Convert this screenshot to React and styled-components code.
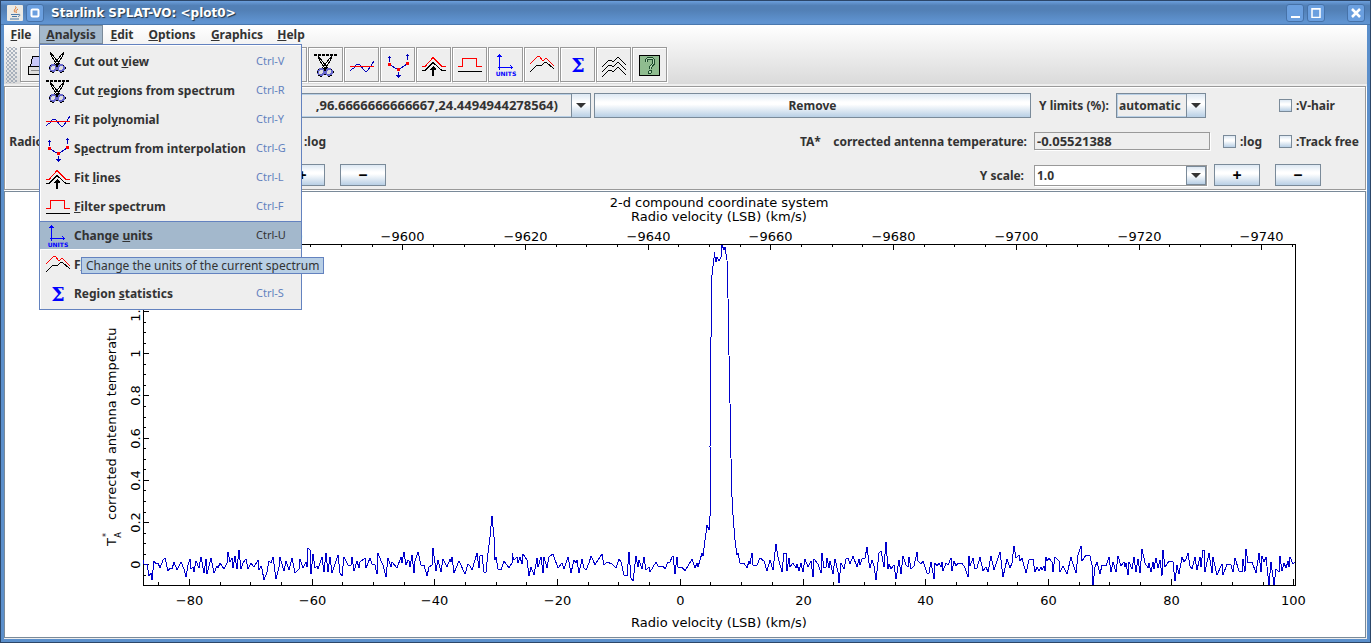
import React, { useState } from "react";
import styled, { createGlobalStyle, css } from "styled-components";

const blue = "#0000ff";

const ScissorsIcon = ({ cut }) => (
  <Icon viewBox="0 0 24 24">
    {cut && (
      <path d="M0 2h24" stroke="#000" strokeWidth="2" strokeDasharray="3 1" />
    )}
    <g transform={cut ? "translate(0 1)" : undefined}>
      <path d="M4 2l2 5 6 9 1.500-2L6 4zM18 2l-2 5-6 9-1.500-2L16 4z" fill="#fff" stroke="#000" />
      <circle cx="7" cy="18" r="3" fill="#ddd" stroke="#6666cc" strokeWidth="2" />
      <circle cx="15" cy="18" r="3" fill="#ddd" stroke="#6666cc" strokeWidth="2" />
      <path d="M3 17v2M4 15h1M4 21h2M8 22h-2M19 17v2M17 15h1M18 21h-2M14 22h2M10 15l1 2 1-2M10 20h2" stroke="#000" fill="none" />
    </g>
  </Icon>
);

const PolynomialIcon = () => (
  <Icon viewBox="0 0 24 24">
    <path d="M0 18l3-3h1l3-4h2l6 7h2l4-5 3-5" stroke="#0000bb" fill="none" />
    <path d="M0 13.500h24" stroke="#ff0000" />
  </Icon>
);

const InterpolationIcon = () => (
  <Icon viewBox="0 0 24 24">
    <g stroke="#0000bb" fill="none">
      <path d="M3.500 11.500L12.500 17l9-6.500" />
      <path d="M3.500 9V3.500M1.500 5.500l2-2 2 2M21.500 7V1.500M19.500 3.500l2-2 2 2M12.500 19v5M10.500 22l2 2 2-2" />
    </g>
    <path d="M2 10h3v3H2zM11 15h3v3h-3zM20 9h3v3h-3z" fill="#ff0000" />
  </Icon>
);

const FitLinesIcon = () => (
  <Icon viewBox="0 0 24 24">
    <path d="M0 13.500h3l8-9 9 9h4" stroke="#ff0000" fill="none" />
    <path d="M0 17.500h3l8-8 9 8h4" stroke="#000" fill="none" />
    <path d="M11 13l3 3v1h-2v6h-2v-6H8v-1z" fill="#000" />
  </Icon>
);

const FilterIcon = () => (
  <Icon viewBox="0 0 24 24">
    <path d="M0 13.500h4.500v-8h14v8H24" stroke="#ff0000" fill="none" />
    <path d="M0 18.500h24" stroke="#000" />
  </Icon>
);

const UnitsIcon = () => (
  <Icon viewBox="0 0 24 24">
    <path d="M5.500 17V2M3.500 4l2-2 2 2M4 14.500h15M16.500 12.500l2 2-2 2" stroke={blue} fill="none" />
    <IconText x="12" y="23" $size={6}>
      UNITS
    </IconText>
  </Icon>
);

const FluxIcon = () => (
  <Icon viewBox="0 0 24 24">
    <path d="M0 11l8-8h1l4 5 3-3 8 8" stroke="#ff0000" fill="none" />
    <path d="M0 19l7-7h2l2 1 4-4h1l8 7" stroke="#000" fill="none" />
  </Icon>
);

const SigmaIcon = () => (
  <Icon viewBox="0 0 24 24">
    <IconText x="12" y="19" $size={19} $serif>
      Σ
    </IconText>
  </Icon>
);

const StackIcon = () => (
  <Icon viewBox="0 0 24 24">
    {[0, 5, 10].map(y => (
      <path
        key={y}
        d={`M0 ${y + 14}l7-7h2l2 2 5-5 8 8`}
        stroke="#000"
        fill="none"
      />
    ))}
  </Icon>
);

const HelpIcon = () => (
  <Icon viewBox="0 0 24 24">
    <rect x="1.500" y="2.500" width="20" height="20" fill="#8fbc8f" stroke="#000" />
    <path d="M8 9c0-5 8-5 8 0 0 3-4 3-4 7" stroke="#1c4a2c" strokeWidth="3" fill="none" />
    <path d="M8 9c0-5 8-5 8 0 0 3-4 3-4 7" stroke="#b4d8b4" strokeWidth="1" fill="none" />
    <circle cx="12" cy="19" r="1.500" fill="#b4d8b4" stroke="#1c4a2c" />
  </Icon>
);

const PrintIcon = () => (
  <Icon viewBox="0 0 24 24">
    <path d="M6.500 3.500h12v10h-14z" fill="#c8c8f8" stroke="#000" />
    <path d="M2.500 13.500h19v8h-19z" fill="#ddd" stroke="#000" />
    <path d="M5 17.500h12" stroke="#888" />
  </Icon>
);

const menus = [
  { name: "File", width: 34 },
  { name: "Analysis", width: 64 },
  { name: "Edit", width: 36 },
  { name: "Options", width: 62 },
  { name: "Graphics", width: 66 },
  { name: "Help", width: 40 }
];

// `at` is the index of the mnemonic letter
const analysisItems = [
  { name: "Cut out view", at: 8, keys: "Ctrl-V", icon: <ScissorsIcon /> },
  { name: "Cut regions from spectrum", at: 4, keys: "Ctrl-R", icon: <ScissorsIcon cut /> },
  { name: "Fit polynomial", at: 7, keys: "Ctrl-Y", icon: <PolynomialIcon /> },
  { name: "Spectrum from interpolation", at: 1, keys: "Ctrl-G", icon: <InterpolationIcon /> },
  { name: "Fit lines", at: 4, keys: "Ctrl-L", icon: <FitLinesIcon /> },
  { name: "Filter spectrum", at: 0, keys: "Ctrl-F", icon: <FilterIcon /> },
  {
    name: "Change units",
    at: 7,
    keys: "Ctrl-U",
    icon: <UnitsIcon />,
    tip: "Change the units of the current spectrum"
  },
  { name: "Flux units", at: 1, keys: "", icon: <FluxIcon /> },
  { name: "Region statistics", at: 7, keys: "Ctrl-S", icon: <SigmaIcon /> }
];

const tools = [
  ["Print", <PrintIcon />],
  ["Save", null],
  ["Close", null],
  ["Configure", null],
  ["Fit width", null],
  ["Fit height", null],
  ["Read line", null],
  ["Cut out view", <ScissorsIcon />],
  ["Cut regions", <ScissorsIcon cut />],
  ["Fit polynomial", <PolynomialIcon />],
  ["Interpolate", <InterpolationIcon />],
  ["Fit lines", <FitLinesIcon />],
  ["Filter", <FilterIcon />],
  ["Change units", <UnitsIcon />],
  ["Flux units", <FluxIcon />],
  ["Statistics", <SigmaIcon />],
  ["Stack", <StackIcon />],
  ["Help", <HelpIcon />]
];

const spectrum = `143,560 144,564 147,564 149,576 151,573 152,580 154,561 156,564 158,563 160,568 163,560 165,558
168,571 170,568 172,569 174,562 177,570 181,562 184,569 186,577 188,565 190,559 191,569 193,567 194,572 196,561
199,568 201,557 204,573 206,559 207,574 211,558 214,573 217,566 218,568 220,563 224,569 227,563 228,552 230,562
232,558 233,568 235,556 237,569 239,550 241,569 243,563 246,559 248,569 251,563 254,567 258,560 259,570 261,566
262,569 264,580 267,572 269,561 271,563 273,557 276,579 279,567 280,557 284,571 286,561 289,570 292,558 295,573
299,569 300,559 303,568 306,562 307,567 308,548 310,550 311,574 313,554 315,568 317,566 318,569 322,557 324,572
326,553 328,572 330,557 332,573 335,564 338,555 340,573 342,576 344,557 348,565 351,565 352,557 354,571 357,561
359,568 360,562 365,558 366,568 370,558 372,564 375,565 377,574 378,553 381,561 383,565 386,577 388,558 391,567
392,562 397,568 401,557 402,563 404,552 406,565 408,560 409,561 410,567 412,555 414,573 415,561 418,552 421,565
424,565 427,576 429,567 432,565 433,548 436,571 438,560 441,572 443,559 447,567 450,559 451,562 452,557 454,573
459,561 465,574 468,564 470,566 472,570 475,560 477,553 479,568 480,556 482,555 484,572 486,572 488,553 490,537
492,516 494,537 495,560 496,557 498,569 501,570 504,561 509,568 512,563 512,553 514,560 517,557 518,563 520,557
522,564 523,554 527,560 529,576 531,567 534,575 537,558 538,567 541,557 543,573 544,557 547,568 549,557 553,554
558,568 562,563 564,569 568,557 571,573 574,560 576,563 577,560 579,573 582,559 584,568 586,570 589,563 591,556
593,560 595,565 598,560 602,554 604,565 607,562 612,564 616,568 619,559 621,562 624,575 627,576 629,552 631,578
633,581 636,556 638,567 639,560 642,569 644,557 646,570 649,567 650,572 656,562 658,566 663,566 665,569 668,562
670,562 672,557 673,556 675,574 677,557 678,567 682,567 685,571 692,559 695,568 697,563 698,567 702,553 703,556
707,525 709,530 710,516 710,447 711,337 712,275 714,258 714,252 716,262 717,257 719,261 721,257 722,245 724,250
725,247 727,260 728,298 729,355 730,403 731,458 732,497 733,515 735,540 737,555 738,553 740,563 744,563 747,568
749,561 750,564 752,553 753,565 757,565 760,558 764,561 767,571 770,560 773,570 776,544 778,557 782,572 784,553
786,553 787,571 789,558 790,567 793,563 796,568 797,564 799,571 801,563 803,572 805,559 808,567 811,561 813,577
814,559 818,564 821,573 822,553 824,568 826,567 827,558 829,568 830,561 833,574 835,559 838,572 839,583 841,563
844,569 846,559 848,558 850,564 853,556 857,567 859,559 860,565 862,559 865,558 867,547 869,563 870,568 872,560
874,566 876,580 879,553 881,551 884,567 886,542 888,569 889,564 891,569 894,565 896,579 899,560 901,574 903,556
906,565 908,567 909,557 911,569 914,566 917,552 918,561 921,564 923,561 927,573 929,573 931,562 934,579 935,563
937,566 939,563 941,567 942,562 943,571 946,563 948,565 951,558 952,571 954,561 956,566 958,563 960,564 962,563
965,568 968,577 969,556 970,566 973,558 975,569 977,568 980,557 983,571 986,567 988,572 991,556 994,570 1000,552
1003,577 1007,559 1010,568 1012,563 1014,546 1016,558 1019,555 1020,561 1022,558 1026,573 1029,560 1033,559
1035,572 1037,567 1039,571 1041,567 1042,570 1044,566 1045,571 1046,557 1047,561 1049,558 1052,562 1053,572
1055,557 1059,561 1060,572 1063,566 1067,574 1071,557 1072,561 1076,573 1078,555 1081,546 1082,561 1086,555
1090,556 1092,565 1093,585 1095,567 1097,562 1100,574 1102,565 1106,566 1109,557 1111,572 1113,562 1116,572
1118,556 1121,566 1124,562 1125,567 1126,563 1128,575 1129,562 1132,569 1134,557 1136,572 1138,559 1140,573
1142,549 1145,563 1148,568 1149,563 1151,572 1153,562 1154,569 1156,558 1158,568 1160,560 1162,576 1163,550
1165,567 1169,561 1173,562 1175,581 1177,565 1179,574 1182,557 1184,562 1186,559 1188,553 1190,566 1192,569
1195,557 1197,570 1200,557 1201,567 1203,550 1204,550 1205,572 1209,553 1212,573 1213,557 1217,575 1222,564
1223,575 1227,564 1231,565 1233,572 1235,558 1239,571 1242,572 1243,559 1245,572 1246,549 1248,563 1252,562
1256,573 1259,553 1261,572 1262,556 1264,562 1266,557 1269,585 1271,562 1274,585 1276,569 1279,572 1280,556
1282,571 1284,563 1286,568 1288,561 1289,567 1290,557 1293,564 1295,562`;

const range = (from, to, step) => {
  const out = [];
  for (let v = from; v <= to; v += step) out.push(v);
  return out;
};

const minus = v => String(v).replace("-", "−");
const xOf = v => Math.round(680.8 + v * 6.135) - 0.5;
const topOf = v => Math.round(402.3 - (v + 9600) * 6.135) + 0.5;
const yOf = v => Math.round(564.3 - v * 211) + 0.5;

const Plot = () => (
  <PlotSvg viewBox="5 192 1360 445" role="img" aria-label="Spectrum plot">
    <g stroke="#000" fill="none" shapeRendering="crispEdges">
      <rect x="143.5" y="244.5" width="1152" height="341" />
      {range(-85, 100, 5).map(v => (
        <path key={v} d={`M${xOf(v)} 585v${v % 20 === 0 ? -6 : -3}`} />
      ))}
      {range(-9745, -9560, 5).map(v => (
        <path key={v} d={`M${topOf(v)} 244v${v % 20 === 0 ? 6 : 3}`} />
      ))}
      {range(-1, 30, 1).map(n => (
        <path key={n} d={`M143 ${yOf(n / 20)}h${n % 4 === 0 ? 6 : 3}`} />
      ))}
    </g>
    <polyline
      points={spectrum}
      fill="none"
      stroke="#0000cc"
      shapeRendering="crispEdges"
    />
    <PlotLabel x="719" y="207">
      2-d compound coordinate system
    </PlotLabel>
    <PlotLabel x="719" y="221">
      Radio velocity (LSB) (km/s)
    </PlotLabel>
    <PlotLabel x="719" y="627">
      Radio velocity (LSB) (km/s)
    </PlotLabel>
    {range(-80, 100, 20).map(v => (
      <PlotLabel key={v} x={xOf(v)} y="605">
        {minus(v)}
      </PlotLabel>
    ))}
    {range(-9740, -9580, 20).map(v => (
      <PlotLabel key={v} x={topOf(v)} y="241">
        {minus(v)}
      </PlotLabel>
    ))}
    {[0, 0.2, 0.4, 0.6, 0.8, 1, 1.2, 1.4].map(v => (
      <PlotLabel key={v} transform={`translate(140 ${yOf(v)}) rotate(-90)`}>
        {v}
      </PlotLabel>
    ))}
    <PlotLabel $start transform="translate(116 520) rotate(-90)">
      corrected antenna temperatu
    </PlotLabel>
    <PlotLabel $start transform="translate(116 546) rotate(-90)">
      T
    </PlotLabel>
    <SmallLabel transform="translate(121 535) rotate(-90)">A</SmallLabel>
    <SmallLabel transform="translate(109 535) rotate(-90)">*</SmallLabel>
  </PlotSvg>
);

const Mnemonic = ({ text, at }) => (
  <span>
    {text.slice(0, at)}
    <u>{text[at]}</u>
    {text.slice(at + 1)}
  </span>
);

const ComboBox = ({ label, $editable, $alignEnd, $grow, $width, value }) => (
  <Combo $grow={$grow} $width={$width}>
    <ComboSelect
      aria-label={label}
      defaultValue={value}
      $editable={$editable}
      $alignEnd={$alignEnd}
    >
      <option>{value}</option>
    </ComboSelect>
    <ComboArrow $editable={$editable}>
      <svg width="10" height="5" viewBox="0 0 10 5">
        <path d="M0 0h10L5 5z" fill="#333" />
      </svg>
    </ComboArrow>
  </Combo>
);

const Check = ({ children, $width }) => (
  <CheckLabel $width={$width}>
    <CheckInput type="checkbox" />
    {children}
  </CheckLabel>
);

const App = () => {
  const [coord, setCoord] = useState("-0.05521388");

  return (
    <Frame>
      <GlobalStyle />
      <TitleBar>
        <svg width="16" height="16" viewBox="0 0 16 16">
          <rect width="16" height="16" rx="1" fill="#eceae4" />
          <path d="M8.500 1.500c2 2-3 3-.5 6M11 4c-3 2-2 2-1.500 4" stroke="#e07020" fill="none" />
          <path d="M4 9.500h7M5 11.500h5M3 14h9M11 9.500c3-1 2 2 0 2" stroke="#4a78a8" fill="none" />
        </svg>
        <TitleButton aria-label="Window menu">
          <svg width="10" height="10" viewBox="0 0 10 10">
            <rect x="1.500" y="1.500" width="7" height="7" rx="1" fill="none" stroke="#fff" strokeWidth="2" />
          </svg>
        </TitleButton>
        <Title>Starlink SPLAT-VO: &lt;plot0&gt;</Title>
        <TitleButton aria-label="Minimize">
          <svg width="10" height="10" viewBox="0 0 10 10">
            <path d="M1 9h9" stroke="#fff" strokeWidth="2" />
          </svg>
        </TitleButton>
        <TitleButton aria-label="Maximize">
          <svg width="10" height="10" viewBox="0 0 10 10">
            <path d="M1 .5v9h8v-9zM1 1h8" fill="none" stroke="#fff" strokeWidth="1.500" />
          </svg>
        </TitleButton>
        <TitleButton $close aria-label="Close">
          <svg width="10" height="10" viewBox="0 0 10 10">
            <path d="M1 1l8 8M9 1l-8 8" stroke="#fff" strokeWidth="2.500" />
          </svg>
        </TitleButton>
      </TitleBar>

      <TopBars>
        <MenuBar>
          {menus.map(menu => (
            <MenuHolder key={menu.name}>
              <MenuButton $width={menu.width} $open={menu.name === "Analysis"}>
                <Mnemonic text={menu.name} at={0} />
              </MenuButton>
              {menu.name === "Analysis" && (
                <Popup>
                  {analysisItems.map(item => (
                    <MenuItem key={item.name} $active={!!item.tip}>
                      {item.icon}
                      <ItemName>
                        <Mnemonic text={item.name} at={item.at} />
                      </ItemName>
                      <Keys $active={!!item.tip}>{item.keys}</Keys>
                      {item.tip && <Tooltip role="tooltip">{item.tip}</Tooltip>}
                    </MenuItem>
                  ))}
                </Popup>
              )}
            </MenuHolder>
          ))}
        </MenuBar>
        <ToolBar>
          <Grip />
          {tools.map(([name, icon]) => (
            <ToolButton key={name} aria-label={name}>
              {icon}
            </ToolButton>
          ))}
        </ToolBar>
      </TopBars>

      <Controls>
        <ControlRow>
          <RowLabel>Displaying:</RowLabel>
          <ComboBox
            label="Displaying"
            value={"spectrum (1\u00a0\u00a0\u00a0\u00a0,96.6666666666667,24.4494944278564)"}
            $grow={20}
            $alignEnd
          />
          <RemoveButton>Remove</RemoveButton>
          <InlineLabel>Y limits (%):</InlineLabel>
          <ComboBox label="Y limits (%)" value="automatic" $width={90} />
          <Spacer />
          <Check $width={86}>:V-hair</Check>
        </ControlRow>
        <ControlRow>
          <LeftGroup>
            <RowLabel>Radio velocity (LSB):</RowLabel>
            <Readout aria-label="Radio velocity (LSB)" readOnly $grow />
          </LeftGroup>
          <Check $width={56}>:log</Check>
          <EndGroup>
            <label htmlFor="antenna">
              TA*&nbsp;&nbsp;&nbsp; corrected antenna temperature:
            </label>
            <Readout
              id="antenna"
              value={coord}
              onChange={e => setCoord(e.target.value)}
            />
            <Check $width={56}>:log</Check>
            <Check $width={86}>:Track free</Check>
          </EndGroup>
        </ControlRow>
        <ControlRow>
          <LeftGroup $scale>
            <RowLabel>X scale:</RowLabel>
            <ComboBox label="X scale" value="1.0" $grow={1} $editable />
          </LeftGroup>
          <StepButton>+</StepButton>
          <StepButton>−</StepButton>
          <EndGroup $scale>
            <ScaleLabel>Y scale:</ScaleLabel>
            <ComboBox label="Y scale" value="1.0" $width={173} $editable />
            <StepButton>+</StepButton>
            <StepButton>−</StepButton>
          </EndGroup>
        </ControlRow>
      </Controls>

      <PlotPanel>
        <Plot />
      </PlotPanel>
    </Frame>
  );
};
export default App;

const GlobalStyle = createGlobalStyle`
  * {
    box-sizing: border-box;
  }
  body {
    margin: 0;
    background: #eee;
  }
  body, button, input, select {
    font-family: "Noto Sans", "Open Sans", sans-serif;
    font-size: 12px;
    font-weight: bold;
    color: #333;
  }
`;

const metal = css`
  background: linear-gradient(#dde8f3 0%, #fff 35%, #fff 45%, #b8cfe5 100%);
  border: 1px solid #7a8a99;
`;

const Frame = styled.div`
  display: flex;
  flex-direction: column;
  min-height: 100vh;
  background: #eee;
  border: 1px solid #2c4668;
  box-shadow: inset 3px 0 #5b8fcb, inset -3px 0 #5b8fcb, inset 0 -3px #5b8fcb;
  padding: 0 3px 3px;
`;

const TitleBar = styled.header`
  display: flex;
  align-items: center;
  height: 24px;
  margin: 0 -3px;
  padding: 0 5px 0 6px;
  background: linear-gradient(#6c9fdc 0%, #5280b6 20%, #5280b6 40%, #5f93d0 90%);
  border-bottom: 1px solid #4a78ae;
`;

const TitleButton = styled.button`
  display: flex;
  align-items: center;
  justify-content: center;
  width: 18px;
  height: 18px;
  margin-left: ${props => (props.$close ? "22px" : "3px")};
  padding: 0;
  border: 1px solid #4672a8;
  border-radius: 3px;
  background: #6a9fdf;
`;

const Title = styled.h1`
  flex: 1;
  margin: 0 0 0 7px;
  font-family: "DejaVu Sans", sans-serif;
  font-size: 12px;
  line-height: 20px;
  color: #fff;
  text-shadow: 1px 1px 1px #234;
`;

const TopBars = styled.div`
  height: 60px;
  background: linear-gradient(#fff, #dadada);
  border-bottom: 1px solid #eee;
`;

const MenuBar = styled.nav`
  display: flex;
  gap: 1px;
  height: 19px;
`;

const MenuHolder = styled.div`
  position: relative;
`;

const MenuButton = styled.button`
  width: ${props => props.$width}px;
  height: 19px;
  padding: 0;
  border: 1px solid transparent;
  background: ${props => (props.$open ? "#a3b8cc" : "transparent")};
  border-color: ${props => (props.$open ? "#7a8a99" : "transparent")};
  line-height: 17px;
`;

const Popup = styled.div`
  position: absolute;
  z-index: 2;
  top: 19px;
  left: 0;
  width: 263px;
  padding: 2px 0 1px;
  background: #eee;
  border: 1px solid #6382bf;
  box-shadow: inset 1px 1px #fff;
`;

const MenuItem = styled.button`
  position: relative;
  display: flex;
  align-items: center;
  width: 100%;
  height: 29px;
  padding: 0 14px 0 6px;
  border: 0;
  border-top: 1px solid ${props => (props.$active ? "#6382bf" : "transparent")};
  border-bottom: 1px solid ${props => (props.$active ? "#fff" : "transparent")};
  background: ${props => (props.$active ? "#a3b8cc" : "transparent")};
`;

const ItemName = styled.span`
  flex: 1;
  margin-left: 4px;
  text-align: left;
  white-space: nowrap;
`;

const Keys = styled.span`
  width: 31px;
  padding-bottom: 2px;
  font-size: 11px;
  font-weight: normal;
  text-align: left;
  white-space: nowrap;
  color: ${props => (props.$active ? "#333" : "#6382bf")};
`;

const Tooltip = styled.span`
  position: absolute;
  z-index: 3;
  top: 35px;
  left: 41px;
  padding: 0 4px;
  border: 1px solid #6382bf;
  background: #b8cfe5;
  font-weight: normal;
  line-height: 15px;
  white-space: nowrap;
`;

const Icon = styled.svg`
  flex: none;
  width: 24px;
  height: 24px;
  overflow: visible;
  shape-rendering: crispEdges;
`;

const IconText = styled.text`
  font-family: ${props =>
    props.$serif ? '"DejaVu Serif", serif' : '"DejaVu Sans", sans-serif'};
  font-size: ${props => props.$size}px;
  font-weight: bold;
  fill: #0000ff;
  text-anchor: middle;
`;

const ToolBar = styled.div`
  display: flex;
  gap: 1px;
  padding: 3px 2px 0;
`;

const Grip = styled.div`
  width: 11px;
  height: 36px;
  margin-right: 2px;
  background-image: radial-gradient(#8a97a8 20%, transparent 35%),
    radial-gradient(#8a97a8 20%, transparent 35%);
  background-size: 4px 4px;
  background-position: 0 0, 2px 2px;
`;

const ToolButton = styled.button`
  display: flex;
  align-items: center;
  justify-content: center;
  width: 35px;
  height: 35px;
  padding: 0;
  border: 1px solid #999;
  background: #eee;
  box-shadow: inset 1px 1px #fff, 1px 1px #fff;
`;

const Controls = styled.section`
  display: grid;
  gap: 13px;
  margin: 1px 1px 0 0;
  padding: 5px 0 3px 4px;
  border: 1px solid #999;
  box-shadow: inset 1px 1px #fff, 1px 1px #fff;
`;

const ControlRow = styled.div`
  display: flex;
  align-items: center;
  height: 22px;

  &:first-child {
    height: 26px;
  }

  &:nth-child(2) {
    height: 20px;
  }
`;

const RowLabel = styled.span`
  width: 120px;
  margin-right: 4px;
  text-align: right;
  white-space: nowrap;
`;

const InlineLabel = styled.span`
  width: 77px;
  margin-left: 8px;
  white-space: nowrap;
`;

const LeftGroup = styled.div`
  display: flex;
  align-items: center;
  width: 270px;
  margin-right: ${props => (props.$scale ? "0" : "8px")};
`;

const EndGroup = styled.div`
  display: flex;
  align-items: center;
  margin-left: auto;
  padding-right: ${props => (props.$scale ? "44px" : "0")};
`;

const ScaleLabel = styled.span`
  margin-right: 10px;
`;

const Spacer = styled.div`
  width: 73px;
`;

const Combo = styled.div`
  position: relative;
  flex: ${props => (props.$grow ? `${props.$grow} 1 0` : "none")};
  width: ${props => props.$width}px;
  min-width: 0;
`;

const ComboSelect = styled.select`
  display: block;
  appearance: none;
  width: 100%;
  height: ${props => (props.$editable ? "21px" : "25px")};
  padding: 0 ${props => (props.$alignEnd ? "32px" : "20px")} 0 2px;
  border: 1px solid ${props => (props.$editable ? "#999" : "#7a8a99")};
  border-radius: 0;
  background: ${props => (props.$editable ? "#fff" : "#eee")};
  box-shadow: ${props =>
    props.$editable ? "1px 1px #fff" : "inset 0 0 0 1px #b8cfe5"};
  font-size: ${props => (props.$alignEnd ? "13px" : "12px")};
  text-align-last: ${props => (props.$alignEnd ? "right" : "left")};
`;

const ComboArrow = styled.span`
  ${metal}
  position: absolute;
  top: ${props => (props.$editable ? "1px" : "0")};
  bottom: ${props => (props.$editable ? "1px" : "0")};
  right: ${props => (props.$editable ? "1px" : "0")};
  width: 20px;
  display: flex;
  align-items: center;
  justify-content: center;
  pointer-events: none;
`;

const RemoveButton = styled.button`
  ${metal}
  flex: 19 1 0;
  height: 25px;
  margin-left: 3px;
  padding: 0;
`;

const StepButton = styled.button`
  ${metal}
  width: 46px;
  height: 22px;
  padding: 0;
  font-size: 16px;
  line-height: 18px;
  color: #000;

  & + & {
    margin-left: 15px;
  }

  ${Combo} + & {
    margin-left: 7px;
  }
`;

const Readout = styled.input`
  flex: ${props => (props.$grow ? "1" : "none")};
  width: 176px;
  min-width: 0;
  height: 18px;
  margin: 0 13px 0 7px;
  padding: 0 2px;
  border: 1px solid #999;
  background: #eee;
  box-shadow: 1px 1px #fff;
  font-size: 13px;
`;

const CheckLabel = styled.label`
  display: flex;
  align-items: center;
  gap: 4px;
  width: ${props => props.$width}px;
  white-space: nowrap;
`;

const CheckInput = styled.input`
  ${metal}
  appearance: none;
  width: 13px;
  height: 13px;
  margin: 0;
`;

const PlotPanel = styled.main`
  display: flex;
  flex: 1;
  margin: 1px 1px 1px 0;
  border: 1px solid #7a8a99;
  background: #fff;
`;

const PlotSvg = styled.svg`
  display: block;
  width: 100%;
`;

const PlotLabel = styled.text`
  font-family: "DejaVu Sans", sans-serif;
  font-size: 13px;
  font-weight: normal;
  fill: #000;
  text-anchor: ${props => (props.$start ? "start" : "middle")};
`;

const SmallLabel = styled(PlotLabel)`
  font-size: 8px;
`;
